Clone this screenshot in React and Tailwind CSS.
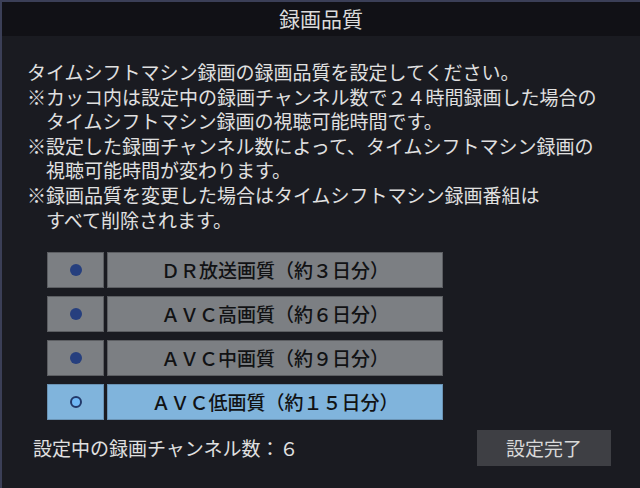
import React from 'react'

const options = [
  { label: 'ＤＲ放送画質（約３日分）', selected: false },
  { label: 'ＡＶＣ高画質（約６日分）', selected: false },
  { label: 'ＡＶＣ中画質（約９日分）', selected: false },
  { label: 'ＡＶＣ低画質（約１５日分）', selected: true },
]

const lines = [
  'タイムシフトマシン録画の録画品質を設定してください。',
  '※カッコ内は設定中の録画チャンネル数で２４時間録画した場合の',
  '　タイムシフトマシン録画の視聴可能時間です。',
  '※設定した録画チャンネル数によって、タイムシフトマシン録画の',
  '　視聴可能時間が変わります。',
  '※録画品質を変更した場合はタイムシフトマシン録画番組は',
  '　すべて削除されます。',
]

const OptionRow = ({ label, selected }) => {
  const cell = selected
    ? 'bg-[#80b4dc] border-[#6a93b4]'
    : 'bg-[#7c7f83] border-[#5c5e62]'
  return (
    <div className="flex gap-[3px] h-[36px]">
      <div className={`w-[57px] border flex items-center justify-center ${cell}`}>
        {selected ? (
          <div className="w-[12px] h-[12px] rounded-full bg-[#70b8f6] border-2 border-[#22396a]" />
        ) : (
          <div className="w-[12px] h-[12px] rounded-full bg-[#263f7e]" />
        )}
      </div>
      <div className={`w-[336px] border flex items-center justify-center text-[19px] font-medium text-[#111214] ${cell}`}>
        {label}
      </div>
    </div>
  )
}

export default function App() {
  return (
    <div className="w-[640px] h-[488px] bg-[#1a1b21] border-l-2 border-t-2 border-[#3b3f57] flex flex-col font-['Noto_Sans_CJK_JP',sans-serif] overflow-hidden">
      {/* Title */}
      <div className="h-[34px] bg-[#111116] flex items-center justify-center text-[21px] text-[#dcdcdc]">
        録画品質
      </div>

      {/* Description */}
      <div className="pl-[25px] pt-[24px] text-[19px] leading-[24.6px] text-[#e0e0e0] whitespace-pre">
        {lines.map((l, i) => (
          <div key={i}>{l}</div>
        ))}
      </div>

      {/* Options */}
      <div className="ml-[45px] mt-[20px] flex flex-col gap-[8px]">
        {options.map((o) => (
          <OptionRow key={o.label} {...o} />
        ))}
      </div>

      {/* Footer */}
      <div className="mt-[10px] pl-[31px] pr-[29px] flex items-center justify-between">
        <div className="text-[19px] text-[#e0e0e0]">設定中の録画チャンネル数：６</div>
        <div className="w-[134px] h-[36px] bg-[#3e3f44] flex items-center justify-center text-[19px] text-[#d8d8d8]">
          設定完了
        </div>
      </div>
    </div>
  )
}
